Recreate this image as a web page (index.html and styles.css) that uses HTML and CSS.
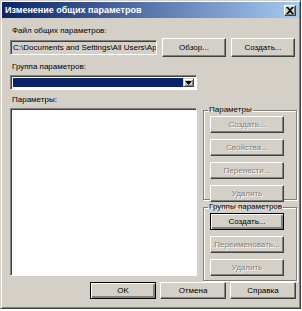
FILE: index.html
```html
<!DOCTYPE html>
<html lang="ru">
<head>
    <meta charset="UTF-8">
    <title>Изменение общих параметров</title>
    <link rel="stylesheet" href="styles.css">
</head>
<body>
    <div class="window">
        <div class="titlebar">
            <span class="title">Изменение общих параметров</span>
            <div class="close-btn">
                <svg width="8" height="7" viewBox="0 0 8 7"><path d="M0 0h2l2 2 2-2h2L5 3.5 8 7H6L4 5 2 7H0l3-3.5z" fill="#000"/></svg>
            </div>
        </div>
        <div class="content">
            <p class="caption caption-first">Файл общих параметров:</p>
            <div class="file-row">
                <div class="field">C:\Documents and Settings\All Users\Ap</div>
                <div class="btn btn-top">Обзор...</div>
                <div class="btn btn-top">Создать...</div>
            </div>

            <p class="caption">Группа параметров:</p>
            <div class="combo">
                <div class="combo-value"></div>
                <div class="combo-arrow">
                    <svg width="7" height="4" viewBox="0 0 7 4"><path d="M0 0h7L3.5 4z" fill="#000"/></svg>
                </div>
            </div>

            <p class="caption">Параметры:</p>
            <div class="main">
                <div class="listbox"></div>
                <div class="side">
                    <fieldset class="group group-params">
                        <legend>Параметры</legend>
                        <div class="btn btn-side disabled">Создать...</div>
                        <div class="btn btn-side disabled">Свойства...</div>
                        <div class="btn btn-side disabled">Перенести...</div>
                        <div class="btn btn-side disabled">Удалить</div>
                    </fieldset>
                    <fieldset class="group group-groups">
                        <legend>Группы параметров</legend>
                        <div class="btn btn-side default">Создать...</div>
                        <div class="btn btn-side disabled">Переименовать...</div>
                        <div class="btn btn-side disabled">Удалить</div>
                    </fieldset>
                </div>
            </div>

            <div class="footer">
                <div class="btn btn-foot default">OK</div>
                <div class="btn btn-foot">Отмена</div>
                <div class="btn btn-foot">Справка</div>
            </div>
        </div>
    </div>
</body>
</html>
```

FILE: styles.css
```css
*{
    margin: 0;
    padding: 0;
    box-sizing: border-box;
}

body{
    background-color: #ffffff;
    font-family: 'Liberation Sans', Arial, sans-serif;
    font-size: 8px;
    color: #000000;
}

.window{
    width: 301px;
    height: 309px;
    background-color: #d4d0c8;
    border: 1px solid;
    border-color: #d4d0c8 #404040 #404040 #d4d0c8;
    box-shadow: inset 1px 1px #ffffff, inset -1px -1px #808080;
    padding: 1px;
}

.titlebar{
    height: 16px;
    display: flex;
    align-items: center;
    justify-content: space-between;
    padding: 0 3px 0 3px;
    background: linear-gradient(to right, #0a246a, #a6caf0);
}
.title{
    color: #ffffff;
    font-weight: bold;
    font-size: 9px;
}
.close-btn{
    width: 12px;
    height: 11px;
    display: flex;
    align-items: center;
    justify-content: center;
    background-color: #d4d0c8;
    border: 1px solid;
    border-color: #ffffff #404040 #404040 #ffffff;
    box-shadow: inset -1px -1px #808080;
}

.content{
    padding: 0 0 0 8px;
}

.caption{
    height: 10px;
    line-height: 10px;
    margin-top: 5px;
    padding-left: 2px;
}
.caption-first{
    margin-top: 8px;
}

/* file row */
.file-row{
    display: flex;
    align-items: center;
    margin-top: 2px;
}
.field{
    width: 147px;
    height: 15px;
    line-height: 13px;
    padding-left: 2px;
    white-space: nowrap;
    overflow: hidden;
    background-color: #d4d0c8;
    border: 1px solid;
    border-color: #808080 #ffffff #ffffff #808080;
    box-shadow: inset 1px 1px #404040;
}

/* buttons */
.btn{
    display: flex;
    align-items: center;
    justify-content: center;
    background-color: #d4d0c8;
    border: 1px solid;
    border-color: #ffffff #404040 #404040 #ffffff;
    box-shadow: inset -1px -1px #808080;
    white-space: nowrap;
}
.btn.default{
    border-color: #000000;
    box-shadow: inset 1px 1px #ffffff, inset -2px -2px #808080;
}
.btn.disabled{
    color: #808080;
    text-shadow: 1px 1px #ffffff;
}
.btn-top{
    width: 64px;
    height: 19px;
    margin-left: 5px;
}
.btn-top:first-of-type{
    margin-left: 7px;
}

/* combo */
.combo{
    width: 187px;
    height: 15px;
    margin-top: 3px;
    display: flex;
    padding: 2px;
    background-color: #ffffff;
    border: 1px solid;
    border-color: #808080 #ffffff #ffffff #808080;
    box-shadow: inset 1px 1px #404040;
}
.combo-value{
    flex: 1;
    background-color: #0a246a;
}
.combo-arrow{
    width: 11px;
    display: flex;
    align-items: center;
    justify-content: center;
    background-color: #d4d0c8;
    border: 1px solid;
    border-color: #d4d0c8 #404040 #404040 #d4d0c8;
    box-shadow: inset 1px 1px #ffffff, inset -1px -1px #808080;
}

/* main area */
.main{
    display: flex;
    margin-top: 3px;
    height: 174px;
}
.listbox{
    width: 187px;
    height: 168px;
    background-color: #ffffff;
    border: 1px solid;
    border-color: #808080 #ffffff #ffffff #808080;
    box-shadow: inset 1px 1px #404040;
}
.side{
    margin-left: 6px;
    width: 94px;
    display: flex;
    flex-direction: column;
}
.group{
    border: 1px solid #808080;
    box-shadow: inset 1px 1px #ffffff, 1px 1px #ffffff;
    padding: 0 12px 0 6px;
    display: flex;
    flex-direction: column;
    gap: 6px;
}
.group legend{
    padding: 0 1px;
    margin-left: -2px;
    line-height: 10px;
    white-space: nowrap;
}
.group-params{
    height: 95px;
    margin-top: -3px;
    padding-top: 1px;
}
.group-groups{
    height: 79px;
    margin-top: 2px;
    padding-top: 1px;
}
.btn-side{
    height: 17px;
    width: 74px;
}

/* footer */
.footer{
    display: flex;
    justify-content: flex-end;
    gap: 4px;
    padding-right: 3px;
    margin-top: 0;
}
.btn-foot{
    width: 66px;
    height: 17px;
}
```
